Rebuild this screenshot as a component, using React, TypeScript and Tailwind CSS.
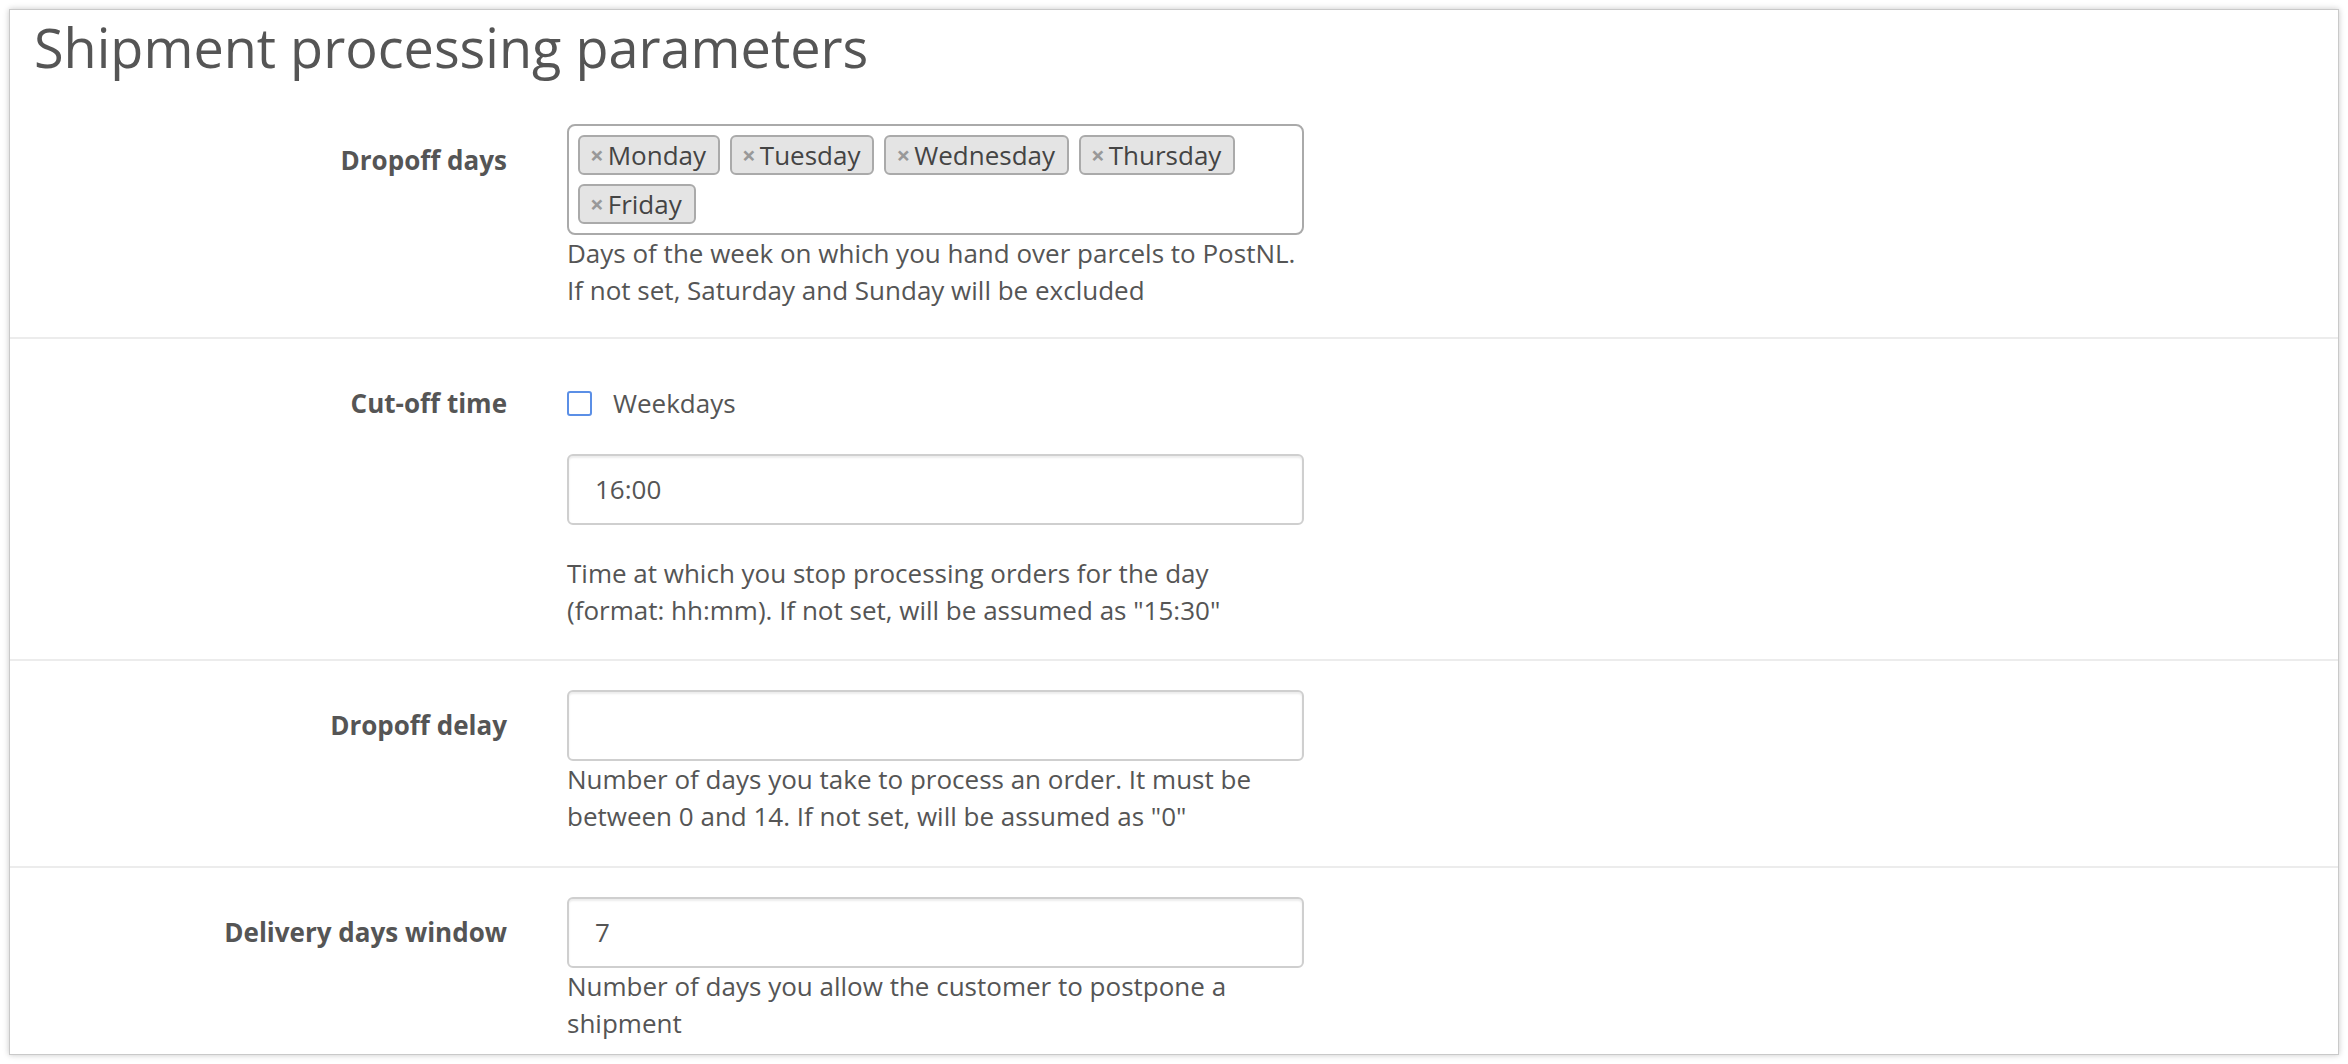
import React from 'react';

const days = ['Monday', 'Tuesday', 'Wednesday', 'Thursday', 'Friday'];

const labelStyle =
  'w-[497px] shrink-0 text-right font-bold text-[26px] leading-[37px] text-[#555]';
const helpStyle = 'text-[26px] leading-[37px] text-[#555]';
const inputStyle =
  'h-[71px] w-[737px] rounded-[6px] border-2 border-[#cfcfcf] bg-white px-[26px] text-[26px] text-[#555] shadow-[inset_0_2px_2px_rgba(0,0,0,0.08)] flex items-center';

const Tag = ({ label }: { label: string }) => (
  <span className="flex h-[40px] items-center rounded-[6px] border-2 border-[#aaa] bg-[#e4e4e4] pl-[10px] pr-[12px] text-[26px] text-[#444]">
    <span className="mr-[4px] text-[24px] font-bold leading-none text-[#999]">×</span>
    {label}
  </span>
);

const Help = ({ lines }: { lines: string[] }) => (
  <div className={helpStyle}>
    {lines.map((l) => (
      <div key={l}>{l}</div>
    ))}
  </div>
);

const Sep = () => <div className="h-[2px] bg-[#ececec]" />;

const App = () => {
  return (
    <div
      className="min-h-screen bg-white p-[9px]"
      style={{ fontFamily: '"Open Sans", "Noto Sans", sans-serif' }}
    >
      <div className="border border-[#c9c9c9] bg-white shadow-[0_0_6px_rgba(0,0,0,0.22)]">
        {/* TITLE */}
        <h1 className="px-[24px] pt-[1px] text-[54px] font-normal leading-[72px] text-[#555]">
          Shipment processing parameters
        </h1>

        {/* DROPOFF DAYS */}
        <div className="flex pt-[41px] pb-[28px]">
          <div className={`${labelStyle} pt-[18px]`}>Dropoff days</div>
          <div className="ml-[60px] w-[737px]">
            <div className="flex flex-wrap gap-x-[10px] gap-y-[9px] rounded-[8px] border-2 border-[#aaa] p-[9px]">
              {days.map((d) => (
                <Tag key={d} label={d} />
              ))}
            </div>
            <Help
              lines={[
                'Days of the week on which you hand over parcels to PostNL.',
                'If not set, Saturday and Sunday will be excluded',
              ]}
            />
          </div>
        </div>
        <Sep />

        {/* CUT-OFF TIME */}
        <div className="flex pt-[46px] pb-[30px]">
          <div className={labelStyle}>Cut-off time</div>
          <div className="ml-[60px] w-[737px]">
            <div className="flex h-[37px] items-center">
              <span className="h-[25px] w-[25px] rounded-[3px] border-2 border-[#5b8fe6] bg-white" />
              <span className="ml-[21px] text-[26px] text-[#555]">Weekdays</span>
            </div>
            <div className={`${inputStyle} mt-[32px]`}>16:00</div>
            <div className="mt-[30px]">
              <Help
                lines={[
                  'Time at which you stop processing orders for the day',
                  '(format: hh:mm). If not set, will be assumed as "15:30"',
                ]}
              />
            </div>
          </div>
        </div>
        <Sep />

        {/* DROPOFF DELAY */}
        <div className="flex pt-[29px] pb-[31px]">
          <div className={`${labelStyle} pt-[17px]`}>Dropoff delay</div>
          <div className="ml-[60px] w-[737px]">
            <div className={inputStyle} />
            <Help
              lines={[
                'Number of days you take to process an order. It must be',
                'between 0 and 14. If not set, will be assumed as "0"',
              ]}
            />
          </div>
        </div>
        <Sep />

        {/* DELIVERY DAYS WINDOW */}
        <div className="flex pt-[29px] pb-[12px]">
          <div className={`${labelStyle} pt-[17px]`}>Delivery days window</div>
          <div className="ml-[60px] w-[737px]">
            <div className={inputStyle}>7</div>
            <Help
              lines={[
                'Number of days you allow the customer to postpone a',
                'shipment',
              ]}
            />
          </div>
        </div>
      </div>
    </div>
  );
};

export default App;
